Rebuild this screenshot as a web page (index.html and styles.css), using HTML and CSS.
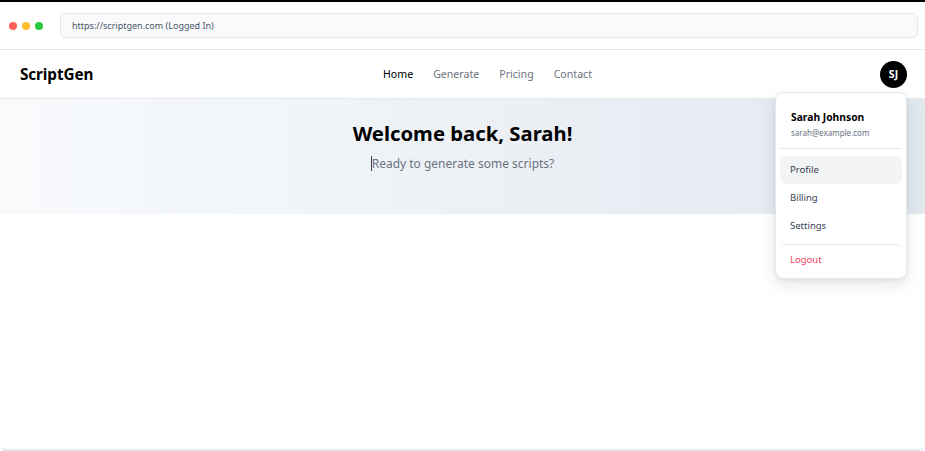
FILE: index.html
```html
<!DOCTYPE html>
<html>
<head>
<meta charset="utf-8">
<link rel="stylesheet" href="styles.css">
</head>
<body>
<div class="frame">
  <div class="chrome">
    <div class="dots"><span class="dot red"></span><span class="dot yellow"></span><span class="dot green"></span></div>
    <div class="url">https://scriptgen.com (Logged In)</div>
  </div>
  <div class="page">
    <header class="nav">
      <div class="logo">ScriptGen</div>
      <nav class="links">
        <a class="link active">Home</a>
        <a class="link">Generate</a>
        <a class="link">Pricing</a>
        <a class="link">Contact</a>
      </nav>
      <div class="user">
        <div class="avatar">SJ</div>
        <div class="menu">
          <div class="menu-head">
            <div class="menu-name">Sarah Johnson</div>
            <div class="menu-email">sarah@example.com</div>
          </div>
          <div class="menu-items">
            <div class="item hover">Profile</div>
            <div class="item">Billing</div>
            <div class="item">Settings</div>
          </div>
          <div class="menu-foot">
            <div class="item logout">Logout</div>
          </div>
        </div>
      </div>
    </header>
    <section class="hero">
      <h1 class="title">Welcome back, Sarah!</h1>
      <p class="sub"><span class="caret"></span>Ready to generate some scripts?</p>
    </section>
    <main class="content"></main>
  </div>
</div>
</body>
</html>
```
FILE: styles.css
```css
* { box-sizing: border-box; }
html, body { margin: 0; padding: 0; }
body {
  font-family: "Noto Sans", "Open Sans", sans-serif;
  background: #ffffff;
  color: #111827;
  border-top: 2px solid #000;
  height: 451px;
  overflow: hidden;
}
.frame {
  height: 449px;
  display: flex;
  flex-direction: column;
  border-bottom: 2px solid #e2e8f0;
  border-radius: 0 0 6px 6px;
}
.chrome {
  height: 48px;
  display: flex;
  align-items: center;
  padding: 0 7px 0 9px;
  border-bottom: 1px solid #e5e7eb;
  background: #fff;
}
.dots { display: flex; gap: 5px; width: 51px; }
.dot { width: 8px; height: 8px; border-radius: 50%; display: block; }
.red { background: #ff5f57; }
.yellow { background: #febc2e; }
.green { background: #28c840; }
.url {
  flex: 1;
  height: 25px;
  margin-top: -1px;
  border: 1px solid #e5e7eb;
  border-radius: 5px;
  background: #f8fafc;
  font-size: 9px;
  color: #4b5563;
  display: flex;
  align-items: center;
  padding-left: 11px;
}
.page { flex: 1; display: flex; flex-direction: column; }
.nav {
  height: 49px;
  display: flex;
  align-items: center;
  padding: 0 18px 0 20px;
  border-bottom: 1px solid #e5e7eb;
  position: relative;
}
.logo { flex: 1; font-weight: 700; font-size: 15.3px; color: #000; letter-spacing: -0.1px; }
.links { display: flex; gap: 20px; margin-left: 48px; }
.link { font-size: 10.6px; color: #6b7280; text-decoration: none; }
.link.active { color: #000; }
.user { flex: 1; display: flex; justify-content: flex-end; position: relative; }
.avatar {
  width: 27px; height: 27px; border-radius: 50%;
  background: #000; color: #fff;
  font-size: 10.5px; font-weight: 700;
  display: flex; align-items: center; justify-content: center;
}
.menu {
  position: absolute;
  top: 31px;
  right: 0;
  width: 132px;
  background: #fff;
  border: 1px solid #e5e7eb;
  border-radius: 8px;
  box-shadow: 0 6px 16px rgba(15, 23, 42, 0.10), 0 2px 4px rgba(15, 23, 42, 0.05);
  padding: 0 4px 4px;
  z-index: 10;
}
.menu-head {
  padding: 17px 11px 9px;
  border-bottom: 1px solid #e5e7eb;
}
.menu-name { font-size: 10.3px; font-weight: 700; color: #000; line-height: 14px; }
.menu-email { font-size: 8px; color: #6b7280; line-height: 12px; margin-top: 3px; }
.menu-items { padding: 7px 0 4px; display: flex; flex-direction: column; gap: 0; }
.item {
  height: 28px;
  display: flex; align-items: center;
  padding: 0 10px;
  font-size: 9.5px;
  color: #374151;
  border-radius: 6px;
}
.item.hover { background: #f3f4f6; }
.menu-foot { border-top: 1px solid #e5e7eb; border-radius: 6px 6px 0 0; padding-top: 1px; }
.logout { color: #f43f5e; }
.hero {
  height: 115px;
  background: linear-gradient(to right, #f8fafc, #e2e8f0);
  display: flex; flex-direction: column; align-items: center;
  padding-top: 20px;
}
.title { margin: 0; font-size: 20.3px; font-weight: 700; color: #000; line-height: 28px; }
.sub { margin: 8px 0 0; font-size: 12px; color: #6b7280; line-height: 18px; position: relative; }
.caret { display: inline-block; width: 1px; height: 15px; background: #374151; vertical-align: -3px; margin-right: 0; }
.content { flex: 1; }
```
